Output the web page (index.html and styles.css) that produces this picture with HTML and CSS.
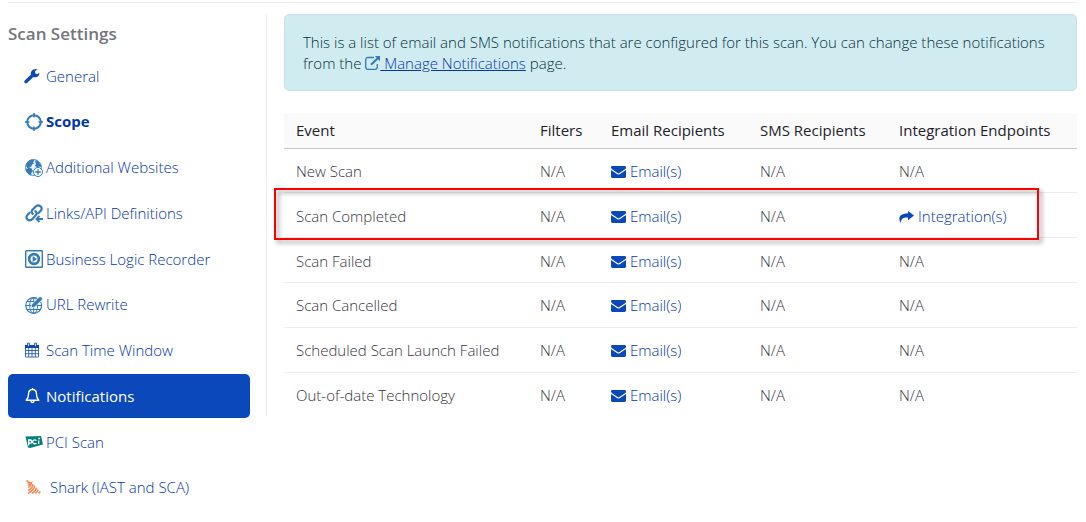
FILE: index.html
```
<!DOCTYPE html>
<html lang="en">

<head>
  <meta charset="UTF-8" />
  <meta name="viewport" content="width=device-width, initial-scale=1.0" />
  <title>Scan Settings - Notifications</title>
  <link rel="stylesheet" href="styles.css">
</head>

<body>
  <!-- Shared icons -->
  <svg class="sprite" aria-hidden="true">
    <symbol id="mail" viewBox="0 0 15 12">
      <path fill="currentColor" d="M1.4 0h12.2C14.4 0 15 .6 15 1.4 15 2.300 14.400 3 13.700 3.500L9.200 6.600C8.600 7 8.100 7.400 7.500 7.400S6.400 7 5.800 6.600L1.300 3.500C.7 3.100 0 2.200 0 1.500 0 .7.500 0 1.400 0z" />
      <path fill="currentColor" d="M0 3.900c.3.300.5.500.8.700l4.400 3c.7.500 1.500 1 2.300 1s1.600-.5 2.300-1l4.400-3c.3-.2.500-.4.800-.7v6.700c0 .8-.6 1.400-1.400 1.400H1.400C.6 12 0 11.400 0 10.600z" />
    </symbol>
  </svg>

  <div class="page">
    <aside class="sidebar">
      <h2>Scan Settings</h2>
      <nav class="menu">
        <a href="#general">
          <svg class="icon" viewBox="1 -1 19 19"><path fill="#0b49bb" d="M.5 13.400 7.300 6.800C6.600 4 8.800 1 12.300 1c.7 0 1.400.2 2 .5L11.700 3.200v2.300l2 1.100 2.500-1.600c.1 3-2.300 5-4.800 4.800-.6 0-1.100-.1-1.600-.3l-6.600 6.400c-1.500 1.200-3.900-1-2.700-2.500z" /></svg>
          General
        </a>
        <a href="#scope" class="strong">
          <svg class="icon" viewBox="0 0 18 18" fill="none" stroke="#337ab7"><circle cx="9" cy="9" r="6.800" stroke-width="2" /><path stroke-width="1.600" d="M9 0v4.500M9 13.500V18M0 9h4.500M13.500 9H18" /></svg>
          Scope
        </a>
        <a href="#websites">
          <svg class="icon" viewBox="0 0 18 18">
            <circle cx="8.500" cy="8.500" r="8" fill="#e9f1f8" stroke="#337ab7" stroke-width=".8" />
            <path fill="#337ab7" d="M1 6C2 2.500 5 .4 8 .5l1.500 1.200L8 3l1 1.500-2 1-.5 2L4 8l2.500 1.500L8 12l-1.500 1.500-.5 3C3 15.500 1 13 .6 10L3 9.500 1.500 8zM11 1l2.500 1.500L16 6l.4 2-2.400-.5-1.500 1L10 7l1-2.500-1-1.500z" />
            <circle cx="13" cy="13" r="4.500" fill="#fff" stroke="#337ab7" />
            <path stroke="#337ab7" stroke-width="1.300" d="M13 10.200v5.600M10.200 13h5.600" />
          </svg>
          Additional Websites
        </a>
        <a href="#links">
          <svg class="icon" viewBox="0 0 18 18" fill="none" stroke="#337ab7" stroke-width="2.200" stroke-linecap="round" stroke-linejoin="round">
            <path d="M7.800 9.800C6.300 8.500 6.300 6.900 7.500 5.700l3.200-3.300C12 1.100 14 1.100 15.500 2.300s1.500 3 .2 4.400L13.200 9.200" />
            <path d="M10.300 7.200c1.600 1.200 1.700 2.800.5 4.100L7.400 14.900c-1.500 1.600-3.500 1.600-4.900.5s-1.400-2.900-.1-4.300L4.600 8.800" />
            <path stroke-linecap="butt" stroke-linejoin="miter" stroke-width="1.900" d="M18 15h-6.500M14.500 12 11.500 15l3 3" />
          </svg>
          Links/API Definitions
        </a>
        <a href="#recorder">
          <svg class="icon" viewBox="0 0 18 18"><rect x=".7" y=".7" width="16.600" height="16.600" rx=".6" fill="#fff" stroke="#337ab7" stroke-width="1.400" /><circle cx="9" cy="9" r="6.200" fill="#337ab7" /><circle cx="9" cy="9" r="3.500" fill="#fff" /><path fill="#337ab7" d="M7.600 6v6L12 9z" /></svg>
          Business Logic Recorder
        </a>
        <a href="#rewrite">
          <svg class="icon" viewBox="0 0 18 18">
            <g fill="none" stroke="#337ab7"><circle cx="8.700" cy="9.500" r="7.900" stroke-width="1.200" /><ellipse cx="8.700" cy="9.500" rx="4" ry="7.900" /><path d="M8.700 1.500v16M.8 9.500h15.800M2 5.500h13.400M2 13.500h13.400" /></g>
            <path fill="#337ab7" stroke="#fff" stroke-width=".7" d="M6 12l.8-3.600L14 1.200C15.500-.2 18.300 2 17 4L9.700 11z" />
          </svg>
          URL Rewrite
        </a>
        <a href="#window">
          <svg class="icon" viewBox="0 0 18 18"><path fill="#0b49bb" d="M0 3h14v3H0zM2.200.8h2.600v4H2.200zM9.200.8h2.600v4H9.200z" /><path stroke="#fff" stroke-width=".8" d="M3.500 1.400v2.800M10.500 1.400v2.800" /><path fill="none" stroke="#0b49bb" stroke-width=".8" d="M.5 5.500v9.500h13V5.500M.5 8.500h13M.5 11.700h13M3.700 6v9M7 6v9M10.300 6v9" /></svg>
          Scan Time Window
        </a>
        <a href="#notifications" class="active" aria-current="page">
          <svg class="icon" viewBox="0 0 18 18" fill="none" stroke="#fff" stroke-width="1.400" stroke-linejoin="round"><path d="M7.500 1v1.300M1.200 13.300c1.800-1.600 2.300-3.400 2.300-6C3.500 4.500 5 2.500 7.500 2.500s4 2 4 4.800c0 2.600.5 4.400 2.300 6z" /><path d="M5.900 13.800c.1 2.200 3.100 2.200 3.200 0" /></svg>
          Notifications
        </a>
        <a href="#pci">
          <svg class="icon" viewBox="0 0 18 18"><path fill="#087d80" d="M.5 3.500 16 3l2 8.500L5 15 3 14.500z" /><g fill="none" stroke="#fff" stroke-width="1.300"><path d="M3.700 12.500V7h1.600c2.100 0 2.100 3.100 0 3.100H3.700M11.500 7.500C8.800 6 7.500 7.800 7.700 9.100c.2 1.600 2.200 2.200 3.900 1.100M13.700 7.500V11M13.300 5.500h1.600" /></g></svg>
          PCI Scan
        </a>
        <a href="#shark" class="shark">
          <svg class="icon" viewBox="0 0 18 18" fill="none" stroke="#f58345" stroke-width="1.500"><path d="M1.500 1.500l2 1.200M2.500 4l3-.8M3 6.500 6.500 4C6.200 6 5 7.500 3.300 8.700M8 5.200C7.700 8 6 10 3.300 11.500M9.700 6.700c-.4 3-2.500 5.500-6.700 7.600M11.300 8.700c-.3 2.500-1.900 4.400-4.300 5.600M13 10.700c-.3 1.700-1.300 2.900-2.700 3.700M15.200 12.200c-.3 1-.9 1.700-1.700 2.200" /></svg>
          Shark (IAST and SCA)
        </a>
      </nav>
    </aside>

    <main class="content">
      <div class="alert">
        This is a list of email and SMS notifications that are configured for this scan. You can change these notifications from the
        <a href="#manage"><svg class="external" viewBox="0 0 15 14" fill="none" stroke="#337ab7"><path stroke-width="1.300" d="M9 1.500H3C1.500 1.500.7 2.300.7 3.800v7.200c0 1.500.8 2.300 2.300 2.300h7c1.500 0 2.300-.8 2.300-2.300V8" /><path stroke-width="2" d="M6 8.800 13 2" /><path fill="#337ab7" stroke="none" d="M9.800 0H15v5.200z" /></svg> Manage Notifications</a> page.
      </div>

      <table class="events">
        <thead>
          <tr>
            <th class="col-event">Event</th>
            <th class="col-filters">Filters</th>
            <th class="col-email">Email Recipients</th>
            <th class="col-sms">SMS Recipients</th>
            <th>Integration Endpoints</th>
          </tr>
        </thead>
        <tbody>
          <tr>
            <td>New Scan</td>
            <td>N/A</td>
            <td><a href="#email"><svg class="mail"><use href="#mail" /></svg>Email(s)</a></td>
            <td>N/A</td>
            <td>N/A</td>
          </tr>
          <tr class="highlight">
            <td>Scan Completed</td>
            <td>N/A</td>
            <td><a href="#email"><svg class="mail"><use href="#mail" /></svg>Email(s)</a></td>
            <td>N/A</td>
            <td><a href="#integration"><svg class="share" viewBox="0 0 15 12"><path fill="currentColor" d="M9 0l6 4.500L9 9.300V6.700C5.500 6.300 2.500 7 1.500 12-.8 7.500-.3 2.500 9 2.600z" /></svg>Integration(s)</a></td>
          </tr>
          <tr>
            <td>Scan Failed</td>
            <td>N/A</td>
            <td><a href="#email"><svg class="mail"><use href="#mail" /></svg>Email(s)</a></td>
            <td>N/A</td>
            <td>N/A</td>
          </tr>
          <tr>
            <td>Scan Cancelled</td>
            <td>N/A</td>
            <td><a href="#email"><svg class="mail"><use href="#mail" /></svg>Email(s)</a></td>
            <td>N/A</td>
            <td>N/A</td>
          </tr>
          <tr>
            <td>Scheduled Scan Launch Failed</td>
            <td>N/A</td>
            <td><a href="#email"><svg class="mail"><use href="#mail" /></svg>Email(s)</a></td>
            <td>N/A</td>
            <td>N/A</td>
          </tr>
          <tr>
            <td>Out-of-date Technology</td>
            <td>N/A</td>
            <td><a href="#email"><svg class="mail"><use href="#mail" /></svg>Email(s)</a></td>
            <td>N/A</td>
            <td>N/A</td>
          </tr>
        </tbody>
      </table>
    </main>
  </div>
</body>

</html>
```
FILE: styles.css
```
:root {
  --blue: #0b49bb;
  --link: #0535ab;
  --line: #ebebf0;
}

* {
  box-sizing: border-box;
}

body {
  margin: 0;
  font-family: "Open Sans", sans-serif;
  font-size: 15px;
  font-weight: 300;
  line-height: 21px;
  color: #363640;
  background: #fff;
}

a {
  color: var(--link);
}

.sprite {
  display: none;
}

.page {
  display: flex;
  align-items: flex-start;
  gap: 16px;
  margin: 2px 9px 0 8px;
  padding-top: 11px;
  border-top: 1px solid var(--line);
}

/* Sidebar */
.sidebar {
  flex: 0 0 242px;
}

.sidebar h2 {
  margin: 9px 0;
  font-size: 17px;
  font-weight: 600;
  line-height: 22px;
  color: #75757c;
}

.menu {
  display: flex;
  flex-direction: column;
  justify-content: space-between;
  min-height: 456px;
}

.menu a {
  display: flex;
  align-items: center;
  gap: 3px;
  height: 44px;
  padding-left: 17px;
  border-radius: 5px;
  text-decoration: none;
}

.menu .strong {
  font-weight: 700;
}

.menu .active {
  background: var(--blue);
  color: #fff;
  font-weight: 400;
}

.menu .shark {
  gap: 7px;
}

.icon {
  flex: none;
  width: 18px;
  height: 18px;
  overflow: visible;
}

/* Content */
.content {
  flex: 1;
  min-width: 0;
  padding-left: 17px;
  border-left: 1px solid var(--line);
}

.alert {
  padding: 17px 18px 16px;
  border: 1px solid #bee5eb;
  border-radius: 5px;
  background: #d1ecf1;
  color: #06323a;
}

.external {
  width: 15px;
  height: 14px;
  vertical-align: -1px;
}

.events {
  width: 100%;
  height: 303px;
  margin-top: 22px;
  border-collapse: collapse;
  table-layout: fixed;
}

.events th,
.events td {
  padding: 0 12px;
  text-align: left;
  white-space: nowrap;
}

.events th {
  height: 35px;
  background: #fafafa;
  border-bottom: 1px solid #c8c8cc;
  color: #22222c;
  font-weight: 500;
}

.events td {
  padding-top: 2px;
  border-top: 1px solid #e9eef3;
}

.events td a {
  text-decoration: none;
}

.col-event {
  width: 244px;
}

.col-filters {
  width: 71px;
}

.col-email {
  width: 149px;
}

.col-sms {
  width: 139px;
}

.mail,
.share {
  width: 15px;
  height: 12px;
  margin-right: 4px;
  vertical-align: -1px;
  color: var(--blue);
}

/* The frame is sized from the row, so the cell itself stays static */
.highlight {
  position: relative;
}

.highlight td:first-child::after {
  content: "";
  position: absolute;
  top: -5px;
  bottom: -2px;
  left: -10px;
  right: 38px;
  border: 2px solid #f00;
  filter: drop-shadow(3px 3px 2px rgba(0, 0, 0, 0.4));
  pointer-events: none;
}
```
